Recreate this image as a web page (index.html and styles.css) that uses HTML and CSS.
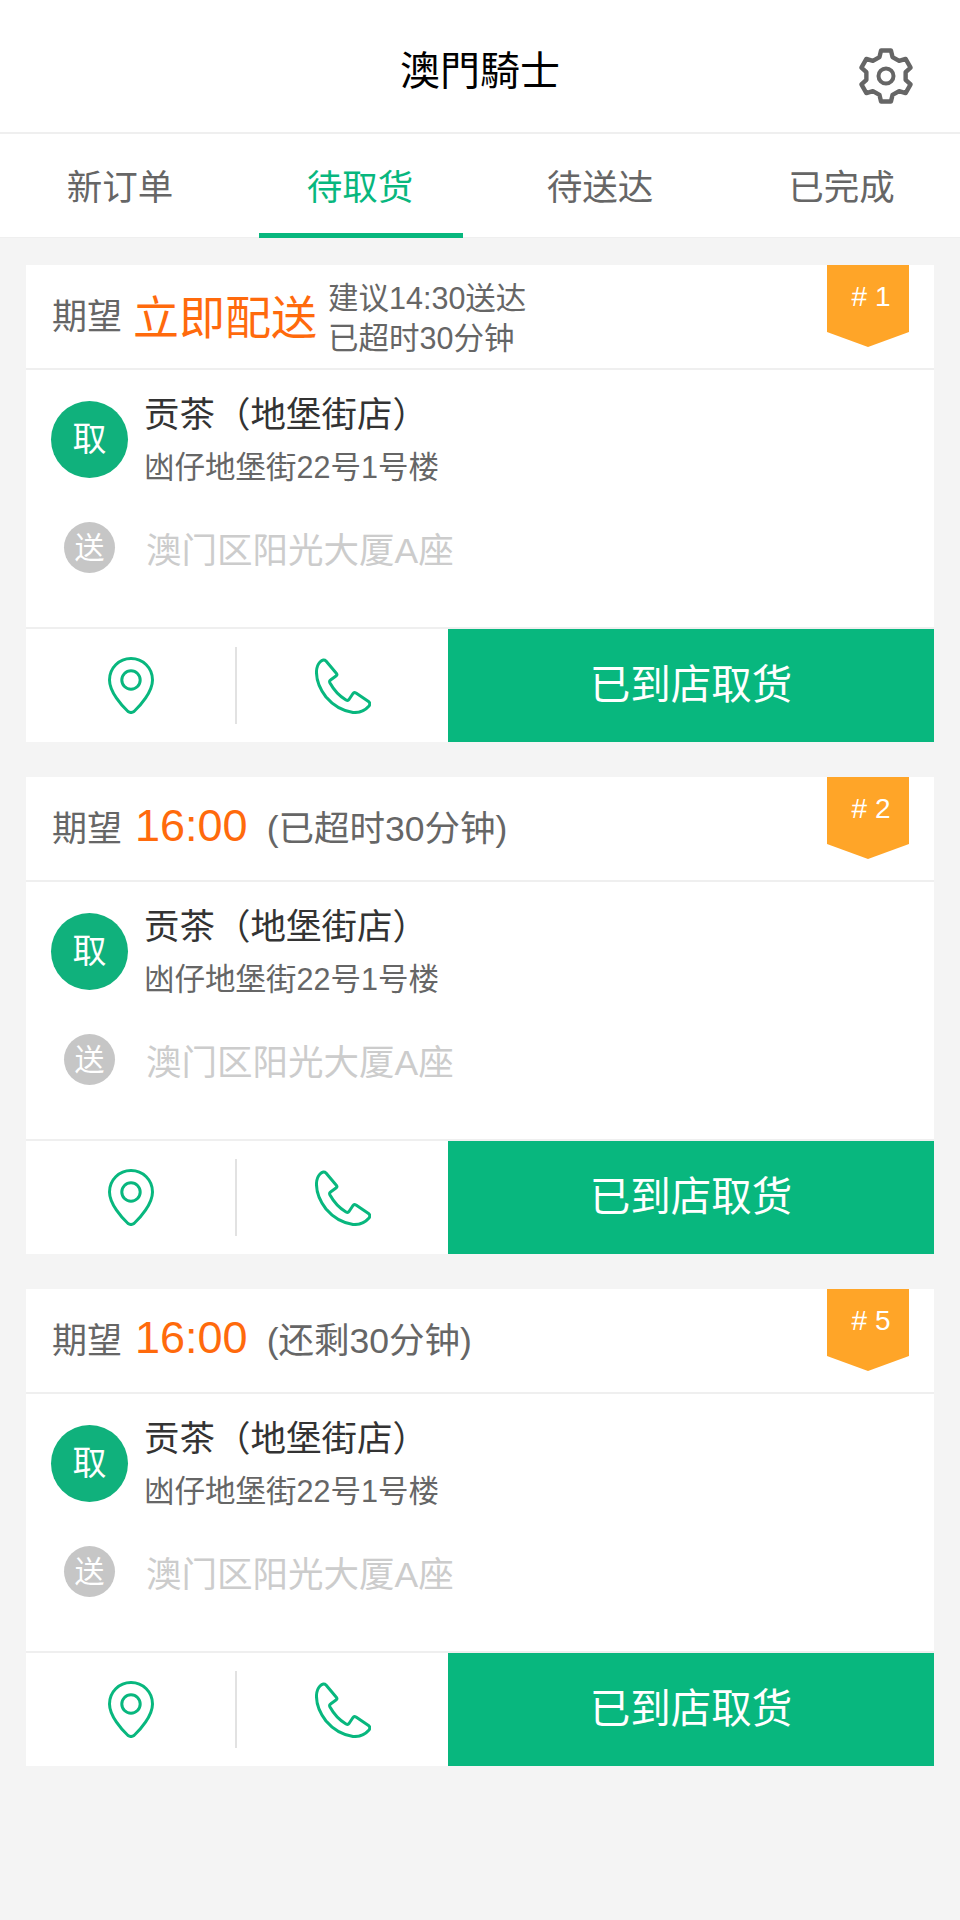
FILE: index.html
```html
<!DOCTYPE html>
<html lang="zh-CN">
<head>
    <meta charset="UTF-8">
    <meta name="viewport" content="width=device-width, initial-scale=1.0">
    <title>澳門騎士</title>
    <link rel="stylesheet" href="styles.css">
</head>
<body>
    <svg class="icon-defs" width="0" height="0">
        <symbol id="icon-gear" viewBox="0 0 58 58">
            <path fill="none" stroke="currentColor" stroke-width="4.4" stroke-linejoin="round" d="M22.49 10.09L24.04 3.48H33.96L35.51 10.09L42.12 13.91L48.62 11.94L53.58 20.53L48.63 25.18V32.82L53.58 37.47L48.62 46.06L42.12 44.09L35.51 47.91L33.96 54.52H24.04L22.49 47.91L15.88 44.09L9.38 46.06L4.42 37.47L9.37 32.82V25.18L4.42 20.53L9.38 11.94L15.88 13.91Z"/>
            <circle cx="29" cy="29" r="7.5" fill="none" stroke="currentColor" stroke-width="4"/>
        </symbol>
        <symbol id="icon-pin" viewBox="0 0 46 57">
            <path fill="none" stroke="currentColor" stroke-width="3" stroke-linejoin="round" d="M23 1.5C11 1.5 1.5 11 1.5 23C1.5 35 14 49 20 54.5Q23 56.5 26 54.5C32 49 44.5 35 44.5 23C44.5 11 35 1.5 23 1.5Z"/>
            <circle cx="23" cy="23" r="9.2" fill="none" stroke="currentColor" stroke-width="3"/>
        </symbol>
        <symbol id="icon-phone" viewBox="0 0 56 56">
            <path fill="none" stroke="currentColor" stroke-width="3" stroke-linejoin="round" d="M5 4Q8.5 .5 11 3L21.5 15.5Q22.5 17 21 18L15.5 22Q14 23 15 25Q21 36 31 42Q33 43 34 41.5L38 35.5Q39 34 41 35L53.5 43.5Q56 45.5 54 48Q48 55 38 54.5Q22 52 11 39Q1 26 1.5 13Q2 7 5 4Z"/>
        </symbol>
    </svg>

    <header class="top-bar">
        <h1 class="top-title">澳門騎士</h1>
        <svg class="gear"><use href="#icon-gear"/></svg>
    </header>

    <nav class="tabs">
        <a class="tab">新订单</a>
        <a class="tab active">待取货</a>
        <a class="tab">待送达</a>
        <a class="tab">已完成</a>
    </nav>

    <main class="order-list">
        <section class="order-card">
            <div class="order-head">
                <span class="expect-label">期望</span>
                <span class="expect-time now">立即配送</span>
                <span class="expect-note">建议14:30送达<br>已超时30分钟</span>
                <span class="order-badge"># 1</span>
            </div>
            <div class="order-body">
                <div class="stop pickup">
                    <span class="stop-mark">取</span>
                    <div class="stop-info">
                        <p class="shop-name">贡茶（地堡街店）</p>
                        <p class="shop-addr">凼仔地堡街22号1号楼</p>
                    </div>
                </div>
                <div class="stop dropoff">
                    <span class="stop-slot"><span class="stop-mark">送</span></span>
                    <p class="drop-addr">澳门区阳光大厦A座</p>
                </div>
            </div>
            <div class="order-actions">
                <a class="action-icon"><svg class="pin"><use href="#icon-pin"/></svg></a>
                <a class="action-icon"><svg class="phone"><use href="#icon-phone"/></svg></a>
                <a class="action-btn">已到店取货</a>
            </div>
        </section>

        <section class="order-card">
            <div class="order-head">
                <span class="expect-label">期望</span>
                <span class="expect-time">16:00</span>
                <span class="expect-left">(已超时30分钟)</span>
                <span class="order-badge"># 2</span>
            </div>
            <div class="order-body">
                <div class="stop pickup">
                    <span class="stop-mark">取</span>
                    <div class="stop-info">
                        <p class="shop-name">贡茶（地堡街店）</p>
                        <p class="shop-addr">凼仔地堡街22号1号楼</p>
                    </div>
                </div>
                <div class="stop dropoff">
                    <span class="stop-slot"><span class="stop-mark">送</span></span>
                    <p class="drop-addr">澳门区阳光大厦A座</p>
                </div>
            </div>
            <div class="order-actions">
                <a class="action-icon"><svg class="pin"><use href="#icon-pin"/></svg></a>
                <a class="action-icon"><svg class="phone"><use href="#icon-phone"/></svg></a>
                <a class="action-btn">已到店取货</a>
            </div>
        </section>

        <section class="order-card">
            <div class="order-head">
                <span class="expect-label">期望</span>
                <span class="expect-time">16:00</span>
                <span class="expect-left">(还剩30分钟)</span>
                <span class="order-badge"># 5</span>
            </div>
            <div class="order-body">
                <div class="stop pickup">
                    <span class="stop-mark">取</span>
                    <div class="stop-info">
                        <p class="shop-name">贡茶（地堡街店）</p>
                        <p class="shop-addr">凼仔地堡街22号1号楼</p>
                    </div>
                </div>
                <div class="stop dropoff">
                    <span class="stop-slot"><span class="stop-mark">送</span></span>
                    <p class="drop-addr">澳门区阳光大厦A座</p>
                </div>
            </div>
            <div class="order-actions">
                <a class="action-icon"><svg class="pin"><use href="#icon-pin"/></svg></a>
                <a class="action-icon"><svg class="phone"><use href="#icon-phone"/></svg></a>
                <a class="action-btn">已到店取货</a>
            </div>
        </section>
    </main>
</body>
</html>
```

FILE: styles.css
```css
:root {
    --green: #08b77e;
    --green-dark: #10b17c;
    --orange: #ff6a0c;
    --line: #efefef;
    --grey-text: #666;
}

* {
    box-sizing: border-box;
    margin: 0;
    padding: 0;
}

body {
    font-family: "Liberation Sans", "Noto Sans CJK SC", sans-serif;
    background: #f4f4f4;
    min-height: 1920px;
}

.icon-defs {
    position: absolute;
}

.top-bar {
    height: 134px;
    background: #fff;
    border-bottom: 2px solid var(--line);
    display: flex;
    justify-content: center;
    align-items: center;
    position: relative;
}

.top-title {
    font-family: "Noto Sans CJK TC", sans-serif;
    font-size: 40px;
    font-weight: 400;
    color: #000;
    line-height: 50px;
    margin-top: 4px;
}

.gear {
    position: absolute;
    left: 857px;
    top: 47px;
    width: 58px;
    height: 58px;
    color: var(--grey-text);
}

.tabs {
    height: 104px;
    background: #fff;
    border-bottom: 1px solid var(--line);
    display: grid;
    grid-template-columns: repeat(4, 1fr);
}

.tab {
    font-size: 35.5px;
    color: var(--grey-text);
    text-align: center;
    line-height: 100px;
    padding-top: 4px;
    position: relative;
}

.tab:nth-child(4) {
    padding-left: 3px;
}

.tab.active {
    color: var(--green);
}

.tab.active::after {
    content: "";
    position: absolute;
    left: 19px;
    bottom: 0;
    width: 204px;
    height: 5px;
    background: var(--green);
}

.order-list {
    padding: 27px 26px 0;
}

.order-card {
    background: #fff;
    margin-bottom: 35px;
}

.order-head {
    height: 105px;
    border-bottom: 2px solid var(--line);
    padding: 0 0 6px 26px;
    display: flex;
    align-items: center;
    position: relative;
}

.expect-label {
    font-size: 35px;
    color: var(--grey-text);
    margin-right: 13px;
}

.expect-time {
    font-size: 45px;
    color: var(--orange);
    margin-right: 19px;
}

.expect-time.now {
    font-size: 46px;
    margin-left: -2px;
    margin-right: 11px;
}

.expect-note {
    font-size: 30.5px;
    line-height: 40px;
    margin-top: 8px;
    color: var(--grey-text);
}

.expect-left {
    font-size: 35.5px;
    color: var(--grey-text);
}

.order-badge {
    position: absolute;
    top: 0;
    right: 25px;
    width: 82px;
    height: 82px;
    padding-top: 15px;
    padding-left: 6px;
    background: #ffa528;
    color: #fff;
    font-size: 28px;
    line-height: 34px;
    text-align: center;
    clip-path: polygon(0 0, 100% 0, 100% 67px, 50% 100%, 0 67px);
}

.order-body {
    height: 259px;
    border-bottom: 2px solid var(--line);
    padding: 31px 0 0 25px;
}

.stop {
    display: flex;
}

.stop-mark {
    flex: none;
    width: 77px;
    height: 77px;
    border-radius: 50%;
    background: var(--green-dark);
    color: #fff;
    font-size: 34px;
    line-height: 77px;
    text-align: center;
}

.stop-info {
    margin-left: 16px;
    margin-top: -9px;
}

.shop-name {
    font-size: 35.5px;
    line-height: 46px;
    color: #333;
}

.shop-addr {
    font-size: 30.5px;
    line-height: 40px;
    margin-top: 9px;
    color: var(--grey-text);
}

.dropoff {
    align-items: center;
    margin-top: 35px;
}

.stop-slot {
    flex: none;
    width: 77px;
    display: flex;
    justify-content: center;
}

.dropoff .stop-mark {
    width: 51px;
    height: 51px;
    line-height: 51px;
    font-size: 30px;
    background: #c6c6c6;
}

.drop-addr {
    margin-left: 18px;
    font-size: 35.5px;
    color: #ccc;
}

.order-actions {
    height: 113px;
    display: flex;
}

.action-icon {
    width: 211px;
    display: flex;
    align-items: center;
    justify-content: center;
}

.action-icon:first-child {
    position: relative;
    padding-right: 2px;
}

.action-icon:first-child::after {
    content: "";
    position: absolute;
    right: 0;
    top: 18px;
    width: 2px;
    height: 77px;
    background: #e2e2e2;
}

.pin {
    width: 46px;
    height: 57px;
    color: var(--green);
}

.phone {
    width: 56px;
    height: 56px;
    color: var(--green);
}

.action-btn {
    flex: 1;
    background: var(--green);
    color: #fff;
    font-size: 40.5px;
    line-height: 113px;
    text-align: center;
}
```
